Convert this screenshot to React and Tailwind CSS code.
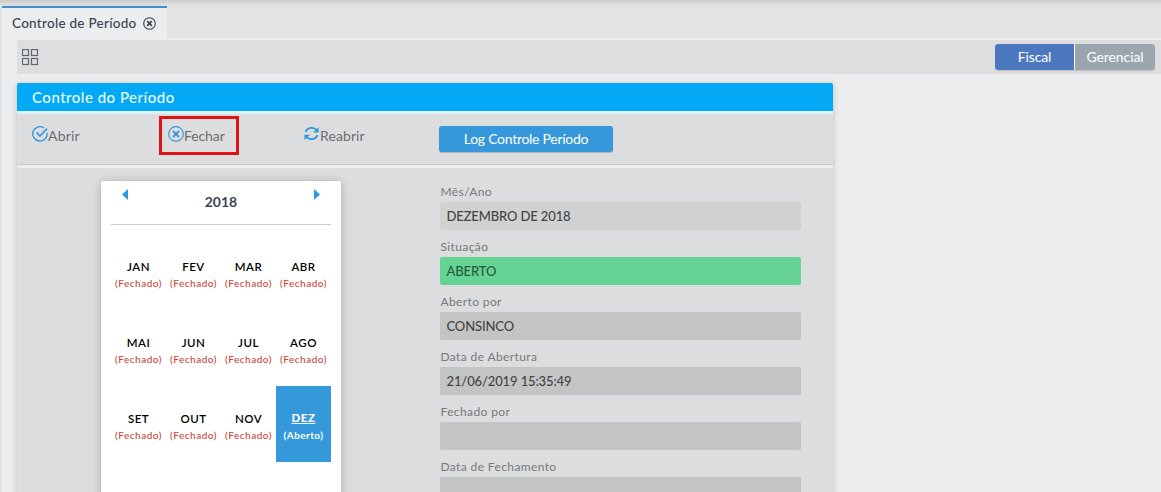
const months = [
  'JAN', 'FEV', 'MAR', 'ABR',
  'MAI', 'JUN', 'JUL', 'AGO',
  'SET', 'OUT', 'NOV', 'DEZ',
];

const fields = [
  { label: 'Mês/Ano', value: 'DEZEMBRO DE 2018', tone: 'bg-[#d0d1d1] text-[#444]' },
  { label: 'Situação', value: 'ABERTO', tone: 'bg-[#64d394] text-[#265c3c]' },
  { label: 'Aberto por', value: 'CONSINCO', tone: 'bg-[#c3c5c4] text-[#444]' },
  { label: 'Data de Abertura', value: '21/06/2019 15:35:49', tone: 'bg-[#c3c5c4] text-[#444]' },
  { label: 'Fechado por', value: '', tone: 'bg-[#c3c5c4] text-[#444]' },
  { label: 'Data de Fechamento', value: '', tone: 'bg-[#c3c5c4] text-[#444]' },
];

function CloseTabIcon() {
  return (
    <svg className="ml-[7px] h-[13px] w-[13px]" viewBox="0 0 13 13" fill="none" stroke="#3a4654">
      <circle cx="6.5" cy="6.5" r="5.8" strokeWidth="1.1" />
      <path d="M4.2 4.2l4.6 4.6M8.8 4.2L4.2 8.8" strokeWidth="1.7" />
    </svg>
  );
}

function GridIcon() {
  return (
    <svg className="h-[17px] w-[17px]" viewBox="0 0 17 17" fill="none" stroke="#5a6472" strokeWidth="1.2">
      <rect x="0.5" y="0.5" width="6" height="6" />
      <rect x="9.5" y="0.5" width="6" height="6" />
      <rect x="0.5" y="9.5" width="6" height="6" />
      <rect x="9.5" y="9.5" width="6" height="6" />
    </svg>
  );
}

function CheckIcon() {
  return (
    <svg className="h-4 w-4" viewBox="0 0 16 16" fill="none" stroke="#3498db" strokeWidth="1.4">
      <path d="M11.8 1.8A7.2 7.2 0 1 0 15.1 7" />
      <path d="M4.6 6.4l3.3 3.6L15.1 2.6" strokeWidth="1.6" />
    </svg>
  );
}

function CancelIcon() {
  return (
    <svg className="h-4 w-4" viewBox="0 0 16 16" fill="none" stroke="#3498db">
      <circle cx="8" cy="8" r="7.4" strokeWidth="1.1" />
      <path d="M5 5l6 6M11 5l-6 6" strokeWidth="1.9" />
    </svg>
  );
}

function RefreshIcon() {
  return (
    <svg className="h-[15px] w-[15px]" viewBox="0 0 16 16" fill="none" stroke="#2b99dd" strokeWidth="2">
      <path d="M1.6 6.3C3 3.2 5.3 2 8 2c2.3 0 4.3 1 5.6 2.9" />
      <path d="M14.4 9.7C13 12.8 10.700 14 8 14c-2.300 0-4.300-1-5.600-2.900" />
      <path d="M15.5 1v5.8H9.7z" fill="#2b99dd" stroke="none" />
      <path d="M0.5 15V9.2h5.8z" fill="#2b99dd" stroke="none" />
    </svg>
  );
}

function Month({ name }) {
  const open = name === 'DEZ';
  return (
    <div
      className={
        open
          ? 'flex h-[76px] w-[55px] flex-col items-center bg-[#3498db] pt-[24px] font-bold text-white'
          : 'flex h-[76px] w-[55px] flex-col items-center pt-[25px] text-[#cb453a]'
      }
    >
      <span className={open ? 'text-[11.5px] leading-[15px] font-black tracking-[0.5px] underline' : 'text-[11.5px] leading-[15px] font-semibold tracking-[0.5px] text-black'}>
        {name}
      </span>
      <span className={open ? 'mt-[3px] text-[10px] leading-[15px] tracking-[0.45px]' : 'mt-[2px] text-[10px] leading-[15px] font-medium tracking-[0.5px]'}>{open ? '(Aberto)' : '(Fechado)'}</span>
    </div>
  );
}

function Calendar() {
  return (
    <div className="mt-[13px] ml-[84px] h-[340px] w-[240px] rounded-t-[2px] bg-white px-[10px] shadow-[0_1px_8px_rgba(0,0,0,0.25)]">
      <div className="flex h-[44px] justify-between border-b border-[#c9cbcd] px-[11px]">
        <svg className="mt-[8px] h-[11px] w-[6px]" viewBox="0 0 6 10" preserveAspectRatio="none" fill="#2b99dd"><path d="M6 0v10L0 5z" /></svg>
        <span className="mt-[12px] text-[14px] leading-[18px] font-bold text-[#3a4654]">2018</span>
        <svg className="mt-[8px] h-[11px] w-[6px]" viewBox="0 0 6 10" preserveAspectRatio="none" fill="#2b99dd"><path d="M0 0v10l6-5z" /></svg>
      </div>
      <div className="mt-[9px] grid grid-cols-4">
        {months.map((m) => <Month key={m} name={m} />)}
      </div>
    </div>
  );
}

export default function App() {
  return (
    <div className="flex h-[492px] w-full flex-col overflow-hidden bg-[#e3e3e3] font-['Lato',sans-serif]">
      <header className="flex h-[38px] shrink-0 items-end bg-linear-to-b from-[#cbcbcb] from-0% via-[#dedede] via-12% to-[#e3e3e3] to-25% pl-[2px]">
        <div className="flex h-[32px] w-[165px] items-center border-t-2 border-[#4190c8] bg-[#ebedee] pl-[10px]">
          <span className="mt-px text-[13.5px] font-medium tracking-[0.27px] whitespace-nowrap text-[#3a4654]">Controle de Período</span>
          <CloseTabIcon />
        </div>
      </header>
      <main className="ml-[2px] flex-1 overflow-hidden bg-[#ebedee] pt-[2px] pl-[15px]">
        <div className="flex h-[34px] items-center justify-between bg-[#dedede] pr-[6px] pl-[5px]">
          <GridIcon />
          <div className="flex gap-px rounded-[3px] bg-white text-[14px] tracking-[-0.1px] text-white shadow-[0_1px_1px_rgba(0,0,0,0.15)]">
            <button className="h-[26px] w-[79px] rounded-l-[3px] bg-[#4b77be] pb-[2px]">Fiscal</button>
            <button className="h-[26px] w-[80px] rounded-r-[3px] bg-[#9aa5ae] pb-[2px]">Gerencial</button>
          </div>
        </div>
        <section className="mt-[9px] w-[816px] rounded-t-[2px] shadow-[0_1px_6px_rgba(0,0,0,0.2)]">
          <h1 className="flex h-[28px] items-center rounded-t-[2px] bg-[#03a9f4] pl-[15px] text-[15px] font-medium tracking-[0.5px] text-[#e6ffff]">
            Controle do Período
          </h1>
          <div className="h-[3px] bg-[#dff3f7]" />
          <div className="flex h-[51px] border-b border-[#c9cbcd] bg-[#dcddde] text-[14px] text-[#6d6e70]">
            <div className="flex w-[142px] pt-[12px] pl-[15px]">
              <CheckIcon />
              <span className="leading-[20px] tracking-[0.2px]">Abrir</span>
            </div>
            <div className="mt-[2px] flex h-[39px] w-[80px] border-[3px] border-[#e01417] pt-[7px] pl-[6px]">
              <CancelIcon />
              <span className="leading-[20px] tracking-[-0.1px]">Fechar</span>
            </div>
            <div className="flex w-[200px] pt-[12px] pl-[65px]">
              <RefreshIcon />
              <span className="ml-px leading-[20px] tracking-[0.1px]">Reabrir</span>
            </div>
            <button className="mt-[12px] h-[26px] w-[174px] rounded-[3px] bg-[#3498db] pb-px text-[14px] tracking-[-0.28px] text-white shadow-[0_1px_1px_rgba(0,0,0,0.2)]">
              Log Controle Período
            </button>
          </div>
          <div className="h-[3px] bg-[#ebedee]" />
          <div className="flex h-[330px] overflow-hidden bg-[#dcddde]">
            <Calendar />
            <div className="ml-[99px] w-[361px] pt-[15px]">
              {fields.map((f) => (
                <div key={f.label} className="h-[55px]">
                  <label className="block h-[19px] pl-[0.5px] text-[12px] leading-[18px] tracking-[0.38px] text-[#77797b]">{f.label}</label>
                  <div className={'flex h-[28px] items-center rounded-[2px] pt-px pl-[6.5px] text-[13px] font-medium tracking-[-0.12px] ' + f.tone}>{f.value}</div>
                </div>
              ))}
            </div>
          </div>
        </section>
      </main>
    </div>
  );
}
